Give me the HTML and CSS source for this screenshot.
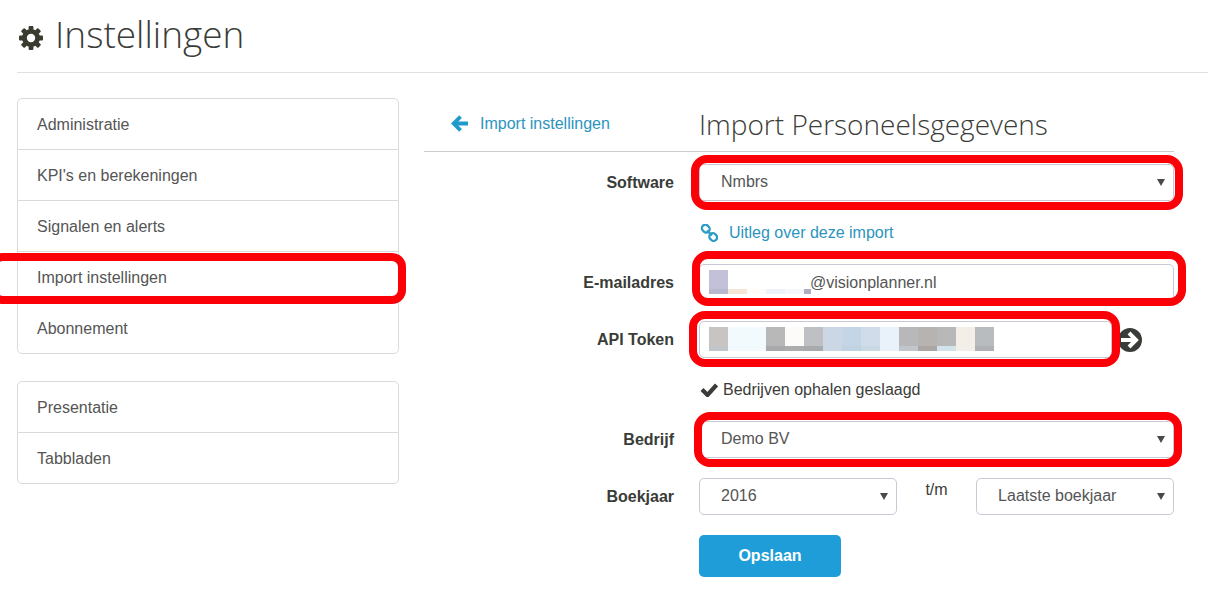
FILE: index.html
```html
<!DOCTYPE html>
<html lang="nl">

<head>
    <meta charset="UTF-8">
    <meta name="viewport" content="width=device-width, initial-scale=1.0">
    <title>Instellingen</title>
    <link rel="stylesheet" href="styles.css">
</head>

<body>
    <header class="page-header">
        <svg class="icon-gear" viewBox="0 0 24 24" aria-hidden="true">
            <g fill="#3a3c30">
                <circle cx="12" cy="12" r="9"/>
                <rect x="9.6" y="0" width="4.8" height="24" rx="1"/>
                <rect x="9.6" y="0" width="4.8" height="24" rx="1" transform="rotate(45 12 12)"/>
                <rect x="9.6" y="0" width="4.8" height="24" rx="1" transform="rotate(90 12 12)"/>
                <rect x="9.6" y="0" width="4.8" height="24" rx="1" transform="rotate(135 12 12)"/>
            </g>
            <circle cx="12" cy="12" r="4.2" fill="#fff"/>
        </svg>
        <h1>Instellingen</h1>
    </header>

    <div class="layout">
        <nav class="sidebar">
            <ul class="menu">
                <li><a href="#">Administratie</a></li>
                <li><a href="#">KPI's en berekeningen</a></li>
                <li><a href="#">Signalen en alerts</a></li>
                <li class="marked marked-menu"><a href="#">Import instellingen</a></li>
                <li><a href="#">Abonnement</a></li>
            </ul>
            <ul class="menu">
                <li><a href="#">Presentatie</a></li>
                <li><a href="#">Tabbladen</a></li>
            </ul>
        </nav>

        <main class="content">
            <div class="content-header columns">
                <a class="back" href="#">
                    <svg class="icon-back" viewBox="0 0 16 16" aria-hidden="true">
                        <path d="M9 1.500L2.500 8 9 14.500M3 8h13" fill="none" stroke="#1f9bcb" stroke-width="3.600"/>
                    </svg>
                    Import instellingen
                </a>
                <h2>Import Personeelsgegevens</h2>
            </div>

            <form class="form columns">
                <label for="software">Software</label>
                <div class="field marked">
                    <select id="software">
                        <option>Nmbrs</option>
                    </select>
                </div>

                <a class="help" href="#">
                    <svg class="icon-link" viewBox="0 0 18 18" aria-hidden="true">
                        <g fill="none" stroke="#2b9cc6" stroke-width="2.300">
                            <rect x="1.800" y="1.200" width="8" height="6.800" rx="3.200" transform="rotate(45 5.800 4.600)"/>
                            <rect x="9.200" y="9.600" width="8" height="6.800" rx="3.200" transform="rotate(45 13.200 13)"/>
                            <path d="M7 6.500l5 5"/>
                        </g>
                    </svg>
                    Uitleg over deze import
                </a>

                <label for="email">E-mailadres</label>
                <div class="field marked marked-email">
                    <input class="email" id="email" type="text" value="@visionplanner.nl">
                    <svg class="mosaic" width="102" height="24" viewBox="0 0 102 24" shape-rendering="crispEdges" aria-hidden="true">
                        <rect width="19" height="19" fill="#c3c1d8"/>
                        <rect y="19" width="19" height="5" fill="#b7b8ce"/>
                        <rect x="19" y="19" width="19" height="5" fill="#f6e6d8"/>
                        <rect x="38" y="19" width="19" height="5" fill="#fefbf8"/>
                        <rect x="57" y="19" width="19" height="5" fill="#eef3fa"/>
                        <rect x="76" y="19" width="19" height="5" fill="#f5f7fc"/>
                        <rect x="95" y="19" width="7" height="5" fill="#aeaec0"/>
                    </svg>
                </div>

                <label for="token">API Token</label>
                <div class="token-row">
                    <div class="field marked marked-token">
                        <input id="token" type="text">
                        <svg class="mosaic" width="285" height="24" viewBox="0 0 285 24" shape-rendering="crispEdges" aria-hidden="true">
                            <rect width="19" height="19" fill="#c8c4c1"/>
                            <rect y="19" width="19" height="5" fill="#c2c5c9"/>
                            <rect x="19" width="38" height="24" fill="#f3fafd"/>
                            <rect x="57" width="19" height="19" fill="#b8b8b9"/>
                            <rect x="57" y="19" width="19" height="5" fill="#a9a9ac"/>
                            <rect x="76" width="19" height="19" fill="#fdfbfa"/>
                            <rect x="76" y="19" width="19" height="5" fill="#adadb0"/>
                            <rect x="95" width="19" height="19" fill="#bfc0c4"/>
                            <rect x="95" y="19" width="19" height="5" fill="#a9aaae"/>
                            <rect x="114" width="19" height="24" fill="#ccd7e6"/>
                            <rect x="133" width="19" height="19" fill="#c4d5e8"/>
                            <rect x="133" y="19" width="19" height="5" fill="#bfd3e0"/>
                            <rect x="152" width="19" height="19" fill="#d0dcea"/>
                            <rect x="152" y="19" width="19" height="5" fill="#c8d9e4"/>
                            <rect x="171" width="19" height="24" fill="#e9f2fb"/>
                            <rect x="190" width="19" height="19" fill="#b8b7b9"/>
                            <rect x="190" y="19" width="19" height="5" fill="#c2c5ca"/>
                            <rect x="209" width="19" height="19" fill="#b7b3b1"/>
                            <rect x="209" y="19" width="19" height="5" fill="#aba6a4"/>
                            <rect x="228" width="19" height="19" fill="#b8b8b9"/>
                            <rect x="228" y="19" width="19" height="5" fill="#d2e3eb"/>
                            <rect x="247" width="19" height="24" fill="#f4eee8"/>
                            <rect x="266" width="19" height="19" fill="#b8bcbf"/>
                            <rect x="266" y="19" width="19" height="5" fill="#b0b1b5"/>
                        </svg>
                    </div>
                    <button class="fetch" type="button" aria-label="Bedrijven ophalen">
                        <svg class="icon-fetch" viewBox="0 0 24 24" aria-hidden="true">
                            <circle cx="12" cy="12" r="12" fill="#3a3c38"/>
                            <path d="M3 12h14M11 5l7 7-7 7" fill="none" stroke="#fff" stroke-width="4"/>
                        </svg>
                    </button>
                </div>

                <p class="status">
                    <svg class="icon-check" viewBox="0 0 18 14" aria-hidden="true">
                        <path d="M2 6.500L7.500 12 16.500 2" fill="none" stroke="#3a3c38" stroke-width="4.200"/>
                    </svg>
                    Bedrijven ophalen geslaagd
                </p>

                <label for="company">Bedrijf</label>
                <div class="field marked marked-company">
                    <select id="company">
                        <option>Demo BV</option>
                    </select>
                </div>

                <label for="year-from">Boekjaar</label>
                <div class="years">
                    <div class="field">
                        <select id="year-from">
                            <option>2016</option>
                        </select>
                    </div>
                    <label class="until" for="year-to">t/m</label>
                    <div class="field">
                        <select id="year-to">
                            <option>Laatste boekjaar</option>
                        </select>
                    </div>
                </div>

                <button class="save" type="submit">Opslaan</button>
            </form>
        </main>
    </div>
</body>

</html>
```
FILE: styles.css
```css
* {
    box-sizing: border-box;
    margin: 0;
    padding: 0;
}

body {
    font: 16px/24px "Liberation Sans", Arial, sans-serif;
    color: #3a3c38;
    background-color: #fff;
}

a {
    color: #2b94bd;
    text-decoration: none;
}

h1,
h2 {
    font-family: "Open Sans", sans-serif;
    font-weight: 300;
}

svg {
    display: block;
    flex: none;
}

.page-header {
    display: flex;
    align-items: center;
    gap: 12px;
    height: 73px;
    margin-left: 17px;
    padding-left: 2px;
    border-bottom: 1px solid #e0e0e0;
}

.page-header h1 {
    padding-bottom: 4px;
    font-size: 37px;
    line-height: 52px;
}

.icon-gear {
    width: 24px;
    height: 28px;
    padding-top: 4px;
}

.layout {
    display: grid;
    grid-template-columns: 382fr 750fr;
    gap: 25px;
    padding: 25px 34px 38px 17px;
}

/* sidebar */
.menu {
    margin-bottom: 27px;
    border: 1px solid #d8dadc;
    border-radius: 5px;
    list-style: none;
}

.menu li + li {
    border-top: 1px solid #d8dadc;
}

.menu a {
    display: block;
    padding: 16px 19px 14px;
    line-height: 20px;
    color: #555;
}

/* red frames around the steps to follow */
.marked {
    position: relative;
}

.marked::after {
    content: "";
    position: absolute;
    inset: -9px -9px -9px -8px;
    border: 8px solid #fb0007;
    border-radius: 16px;
    pointer-events: none;
}

.marked-menu::after {
    inset: 1px -8px -2px -29px;
    border-radius: 14px;
}

.marked-email::after {
    inset: -13px -12px -5px -7px;
}

.marked-token::after {
    inset: -10px -8px -9px -10px;
}

.marked-company::after {
    inset: -9px -8px -9px -5px;
}

/* content */
.columns {
    display: grid;
    grid-template-columns: 10fr 19fr;
    column-gap: 25px;
}

.content-header {
    align-items: center;
    height: 54px;
    padding-bottom: 2px;
    border-bottom: 1px solid #ccc;
}

.content-header h2 {
    font-size: 28px;
    line-height: 38px;
}

.back,
.help,
.status {
    display: flex;
    align-items: center;
}

.back {
    gap: 12px;
    padding-left: 27px;
}

.icon-back {
    width: 17px;
    height: 17px;
}

.form {
    row-gap: 20px;
    align-items: center;
    padding-top: 12px;
}

.form label {
    font-weight: bold;
    text-align: right;
}

.help,
.status,
.save {
    grid-column: 2;
}

.help,
.status {
    height: 23px;
    padding-left: 1px;
}

.help {
    gap: 11px;
}

.icon-link {
    width: 18px;
    height: 18px;
}

.status {
    gap: 5px;
}

.icon-check {
    width: 18px;
    height: 14px;
}

.field {
    position: relative;
}

.field input,
.field select {
    display: block;
    width: 100%;
    height: 37px;
    border: 1px solid #c8c9d4;
    border-radius: 5px;
    font: inherit;
    color: #555;
    background-color: #fff;
}

.field select {
    appearance: none;
    padding: 0 30px 1px 21px;
}

.field:has(select)::before {
    content: "";
    position: absolute;
    top: 15px;
    right: 9px;
    border-top: 7px solid #484a48;
    border-left: 4px solid transparent;
    border-right: 4px solid transparent;
    pointer-events: none;
    z-index: 1;
}

.field input {
    padding: 0 10px;
}

.field .email {
    padding-left: 110px;
}

.mosaic {
    position: absolute;
    top: 6px;
    left: 10px;
}

.token-row {
    display: flex;
    align-items: center;
    gap: 6px;
    padding-right: 32px;
}

.token-row .field {
    flex: 1;
}

.fetch {
    border: 0;
    background: none;
    cursor: pointer;
}

.icon-fetch {
    width: 24px;
    height: 24px;
}

.years {
    display: grid;
    grid-template-columns: 5fr 2fr 5fr;
}

.years .until {
    font-weight: normal;
    text-align: center;
}

.save {
    justify-self: start;
    width: 142px;
    height: 42px;
    border: 0;
    border-radius: 5px;
    font: inherit;
    font-weight: bold;
    color: #fff;
    background-color: #1f9dd9;
    cursor: pointer;
}
```
